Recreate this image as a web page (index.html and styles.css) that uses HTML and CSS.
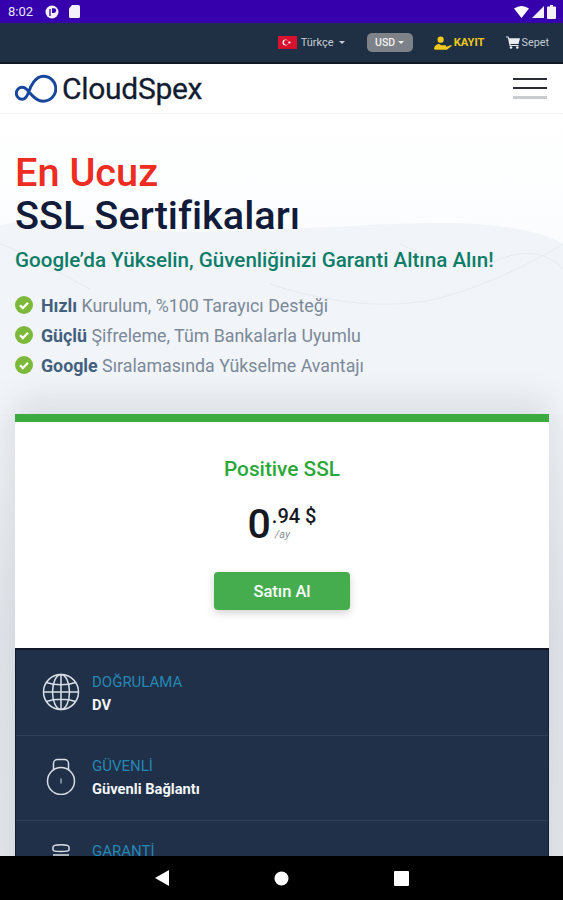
FILE: index.html
```html
<!DOCTYPE html>
<html lang="tr">
<head>
<meta charset="utf-8">
<title>CloudSpex</title>
<link rel="stylesheet" href="styles.css">
</head>
<body>
<div class="screen">
  <div class="status">
    <div class="status-left">
      <span class="clock">8:02</span>
      <svg class="si" width="14" height="14" viewBox="0 0 14 14"><circle cx="7" cy="7" r="6.500" fill="#f4f1fb"/><path d="M7 3.200h1.800a2.400 2.400 0 0 1 0 4.800H7z" fill="#3700ad"/><path d="M5 4v7" stroke="#3700ad" stroke-width="1.300"/></svg>
      <svg class="si" width="11" height="13" viewBox="0 0 11 13"><path d="M3 0h6.500A1.500 1.500 0 0 1 11 1.500V11.500A1.500 1.500 0 0 1 9.500 13H1.500A1.500 1.500 0 0 1 0 11.500V3.500z" fill="#f4f1fb"/></svg>
    </div>
    <div class="status-right">
      <svg width="15" height="12" viewBox="0 0 15 12"><path d="M0 2.500Q7.500-2.500 15 2.500L7.500 12z" fill="#fff"/></svg>
      <svg width="12" height="12" viewBox="0 0 12 12"><path d="M12 0v12H0z" fill="#f2effa"/></svg>
      <svg width="9" height="14" viewBox="0 0 9 14"><path d="M3 0h3v1.500h2a1 1 0 0 1 1 1V13a1 1 0 0 1-1 1H1a1 1 0 0 1-1-1V2.500a1 1 0 0 1 1-1h2z" fill="#f4f1fb"/></svg>
    </div>
  </div>

  <div class="topbar">
    <div class="lang">
      <svg class="flag" width="19" height="13" viewBox="0 0 19 13"><rect width="19" height="13" fill="#d8112e"/><circle cx="7.500" cy="6.500" r="3" fill="#fff"/><circle cx="8.300" cy="6.500" r="2.400" fill="#d8112e"/><circle cx="11.500" cy="6.500" r="1.100" fill="#fff"/></svg>
      <span class="lang-name">Türkçe</span>
      <span class="caret"></span>
    </div>
    <div class="currency">USD<span class="caret caret-white"></span></div>
    <div class="register">
      <svg width="18" height="14" viewBox="0 0 19 14"><circle cx="7" cy="3.500" r="3.300" fill="#f2c81b"/><path d="M0 13c.5-3.500 3-5 5.500-5l2 1.500h4.500c1 0 1.200 1.200.2 1.500H9l5-.4 4-1.400c.8 0 1 .8.4 1.300L13.500 14H1z" fill="#f2c81b"/></svg>
      <span>KAYIT</span>
    </div>
    <div class="cart">
      <svg width="14" height="13" viewBox="0 0 14 13"><path d="M0 .5h2.500l.6 1.800H14l-1.500 5.700H4.300l.3 1h8v1H3.600L1.800 1.500H0z" fill="#e9edf1"/><circle cx="5" cy="11.500" r="1.300" fill="#e9edf1"/><circle cx="11.300" cy="11.500" r="1.300" fill="#e9edf1"/></svg>
      <span>Sepet</span>
    </div>
  </div>

  <header class="nav">
    <div class="logo">
      <svg width="42" height="29" viewBox="0 0 42 29"><path d="M28.300 2.200A12.500 12.500 0 0 1 28.300 27.200C21 27.200 17 21.500 14 18 12 15.500 10 13.300 7.300 13.300A6 6 0 0 0 7.300 25.300C10 25.300 12 22.500 13.500 18.500 15.500 12 20.500 2.200 28.300 2.200Z" fill="none" stroke="#17479e" stroke-width="3"/></svg>
      <span class="logo-text">CloudSpex</span>
    </div>
    <div class="burger"><i></i><i></i><i class="burger-light"></i></div>
  </header>

  <main class="page">
    <svg class="waves" width="563" height="300" viewBox="0 0 563 300" aria-hidden="true">
      <path d="M0 112C40 98 90 118 200 118 300 116 380 109 440 109 500 109 545 118 563 130V300H0z" fill="#f1f4f8"/>
      <path d="M0 130C30 140 60 160 90 175M270 170C330 190 390 196 440 184 490 170 530 150 563 130" fill="none" stroke="#e7ebf0"/>
      <path d="M400 130Q460 160 500 145T563 155" fill="none" stroke="#e7ebf0"/>
    </svg>
    <section class="hero">
      <h1 class="title"><span class="title-red">En Ucuz</span><span class="title-dark">SSL Sertifikaları</span></h1>
      <p class="subtitle">Google’da Yükselin, Güvenliğinizi Garanti Altına Alın!</p>
      <ul class="features">
        <li class="feature"><svg width="18" height="18" viewBox="0 0 18 18"><circle cx="9" cy="9" r="9" fill="#7cb93a"/><path d="M5 9.300l2.800 2.800L13 6.800" fill="none" stroke="#fff" stroke-width="2.200"/></svg><span><b>Hızlı</b> Kurulum, %100 Tarayıcı Desteği</span></li>
        <li class="feature"><svg width="18" height="18" viewBox="0 0 18 18"><circle cx="9" cy="9" r="9" fill="#7cb93a"/><path d="M5 9.300l2.800 2.800L13 6.800" fill="none" stroke="#fff" stroke-width="2.200"/></svg><span><b>Güçlü</b> Şifreleme, Tüm Bankalarla Uyumlu</span></li>
        <li class="feature"><svg width="18" height="18" viewBox="0 0 18 18"><circle cx="9" cy="9" r="9" fill="#7cb93a"/><path d="M5 9.300l2.800 2.800L13 6.800" fill="none" stroke="#fff" stroke-width="2.200"/></svg><span><b>Google</b> Sıralamasında Yükselme Avantajı</span></li>
      </ul>
    </section>

    <section class="card">
      <div class="card-head">
        <h2 class="plan">Positive SSL</h2>
        <div class="price">
          <span class="price-int">0</span>
          <div class="price-side"><span class="price-dec">.94 $</span><span class="price-per">/ay</span></div>
        </div>
        <a class="buy">Satın Al</a>
      </div>
      <div class="specs">
        <div class="spec">
          <svg class="spec-icon" width="38" height="38" viewBox="0 0 38 38" fill="none" stroke="#d9dfe6" stroke-width="1.500"><circle cx="19" cy="19" r="17.500"/><ellipse cx="19" cy="19" rx="8.500" ry="17.500"/><path d="M19 1.500v35M1.500 19h35M4.500 9.500c8 3 21 3 29 0M4.500 28.500c8-3 21-3 29 0"/></svg>
          <div><div class="spec-label">DOĞRULAMA</div><div class="spec-value">DV</div></div>
        </div>
        <div class="spec">
          <svg class="spec-icon" width="38" height="38" viewBox="0 0 38 38" fill="none" stroke="#d9dfe6" stroke-width="1.500"><circle cx="19" cy="24" r="13.500"/><path d="M11.500 13.500V6.500a4 4 0 0 1 4-4h7a4 4 0 0 1 4 4v7"/><path d="M19 21.500v5" stroke-width="1.500" stroke="#9aa5b2"/></svg>
          <div><div class="spec-label">GÜVENLİ</div><div class="spec-value">Güvenli Bağlantı</div></div>
        </div>
        <div class="spec">
          <svg class="spec-icon" width="38" height="38" viewBox="0 0 38 38" fill="none" stroke="#d9dfe6" stroke-width="1.500"><path d="M11 5c0-3 16-3 16 0v3c0 2-16 2-16 0zM11 13h16M11 17c0-2 16-2 16 0v6H11z"/></svg>
          <div><div class="spec-label">GARANTİ</div></div>
        </div>
      </div>
    </section>
  </main>

  <div class="sysnav">
    <svg width="14" height="16" viewBox="0 0 14 16"><path d="M14 0v16L0 8z" fill="#fff"/></svg>
    <svg width="15" height="15" viewBox="0 0 15 15"><circle cx="7.500" cy="7.500" r="7" fill="#fff"/></svg>
    <svg width="15" height="15" viewBox="0 0 15 15"><rect width="15" height="15" rx="1" fill="#fff"/></svg>
  </div>
</div>
</body>
</html>
```

FILE: styles.css
```css
* { box-sizing: border-box; }
html, body { margin: 0; padding: 0; background: #000; }
body { font-family: Roboto, "Liberation Sans", sans-serif; }

.screen { width: 563px; height: 900px; display: flex; flex-direction: column; overflow: hidden; }

.status { height: 23px; flex: none; background: #3700ad; display: flex; justify-content: space-between; align-items: center; padding: 0 7px 0 8px; color: #e9e6f5; }
.status-left, .status-right { display: flex; align-items: center; }
.status-left { gap: 10px; }
.status-right { gap: 3px; }
.clock { font-size: 13px; width: 27px; }

.topbar { height: 41px; flex: none; background: #1f3044; border-bottom: 2px solid #0f1722; display: flex; align-items: center; justify-content: flex-end; padding: 0 14px 0 0; color: #dfe5ea; font-size: 11px; }
.lang { display: flex; align-items: center; }
.flag { margin-right: 4px; }
.lang-name { font-size: 11px; color: #c4ccd4; }
.caret { display: inline-block; margin-left: 5px; width: 0; height: 0; border-left: 3.500px solid transparent; border-right: 3.500px solid transparent; border-top: 3.500px solid #c4ccd4; }
.caret-white { border-top-color: #eee; margin-left: 3px; }
.currency { margin-left: 22px; width: 46px; height: 19px; background: #7d8288; border-radius: 5px; display: flex; align-items: center; justify-content: center; font-size: 10.500px; font-weight: 500; color: #f1f1f1; }
.register { margin-left: 21px; display: flex; align-items: center; gap: 2px; color: #f2c81b; font-size: 11.200px; font-weight: 700; }
.cart { margin-left: 21px; display: flex; align-items: center; gap: 2px; color: #c4ccd4; font-size: 10.800px; }

.nav { height: 50px; flex: none; background: #fff; border-bottom: 1px solid #f1f2f4; display: flex; align-items: center; justify-content: space-between; padding: 0 16px 0 15px; }
.logo { display: flex; align-items: center; gap: 5px; }
.logo-text { font-size: 30px; font-weight: 400; color: #121c30; letter-spacing: -0.300px; -webkit-text-stroke: 0.3px #121c30; }
.burger { width: 34px; display: flex; flex-direction: column; gap: 7px; }
.burger i { display: block; height: 2px; background: #2a2d33; }
.burger .burger-light { height: 3px; background: #c9cbcc; }

.page { flex: 1; min-height: 0; position: relative; overflow: hidden; padding: 0 14px 0 15px; background: linear-gradient(#fff 0, #fcfdfe 100px, #f3f5f8 240px, #e1e5ea 520px, #e3e7eb 100%); }
.waves { position: absolute; left: 0; top: 0; }

.hero { position: relative; padding-top: 37px; height: 300px; }
.title { margin: 0; font-size: 39.700px; line-height: 43px; font-weight: 500; }
.title span { display: block; }
.title-red { color: #ef2c22; }
.title-dark { color: #121c3a; }
.subtitle { margin: 10px 0 0; font-size: 20.600px; line-height: 26px; font-weight: 500; color: #0d7d68; }
.features { list-style: none; margin: 20px 0 0; padding: 0; display: flex; flex-direction: column; gap: 6px; }
.feature { display: flex; align-items: center; gap: 8px; height: 24px; font-size: 17.800px; color: #7b8998; }
.feature b { font-weight: 700; color: #42607e; }

.card { position: relative; background: #fff; border-top: 8px solid #3aaa41; box-shadow: 0 -14px 30px rgba(60, 70, 90, 0.12); }
.card-head { height: 226px; display: flex; flex-direction: column; align-items: center; padding-top: 35px; }
.plan { margin: 0; font-size: 20.800px; line-height: 24px; font-weight: 500; color: #2ba83a; }
.price { display: flex; align-items: flex-start; margin-top: 21px; height: 44px; color: #16191f; }
.price-int { font-size: 41px; line-height: 44px; font-weight: 500; }
.price-side { display: flex; flex-direction: column; margin-left: 1px; padding-top: 2px; }
.price-dec { font-size: 20px; line-height: 24px; font-weight: 500; }
.price-per { font-size: 11px; line-height: 13px; color: #8b8f95; font-style: italic; margin-left: 3px; }
.buy { margin-top: 26px; width: 136px; height: 38px; border-radius: 4px; background: #46ad4e; box-shadow: 0 3px 8px rgba(0, 0, 0, 0.18); color: #fff; font-size: 16.500px; font-weight: 500; display: flex; align-items: center; justify-content: center; }

.specs { background: #1f3048; border-top: 2px solid #111827; border-left: 1px solid #111d33; border-right: 1px solid #111d33; }
.spec { display: flex; align-items: flex-start; height: 85px; border-bottom: 1px solid #2e405a; padding: 21px 0 0 26px; gap: 12px; }
.spec:first-child { height: 86px; padding-top: 23px; }
.spec-icon { flex: none; }
.spec-label { font-size: 15px; line-height: 18px; color: #2686b4; margin-top: 0; }
.spec-value { font-size: 14.700px; line-height: 18px; font-weight: 700; color: #f4f6f8; margin-top: 5px; }

.sysnav { height: 44px; flex: none; background: #000; position: relative; display: flex; align-items: center; padding: 0 0 0 155px; gap: 105px; }
```
